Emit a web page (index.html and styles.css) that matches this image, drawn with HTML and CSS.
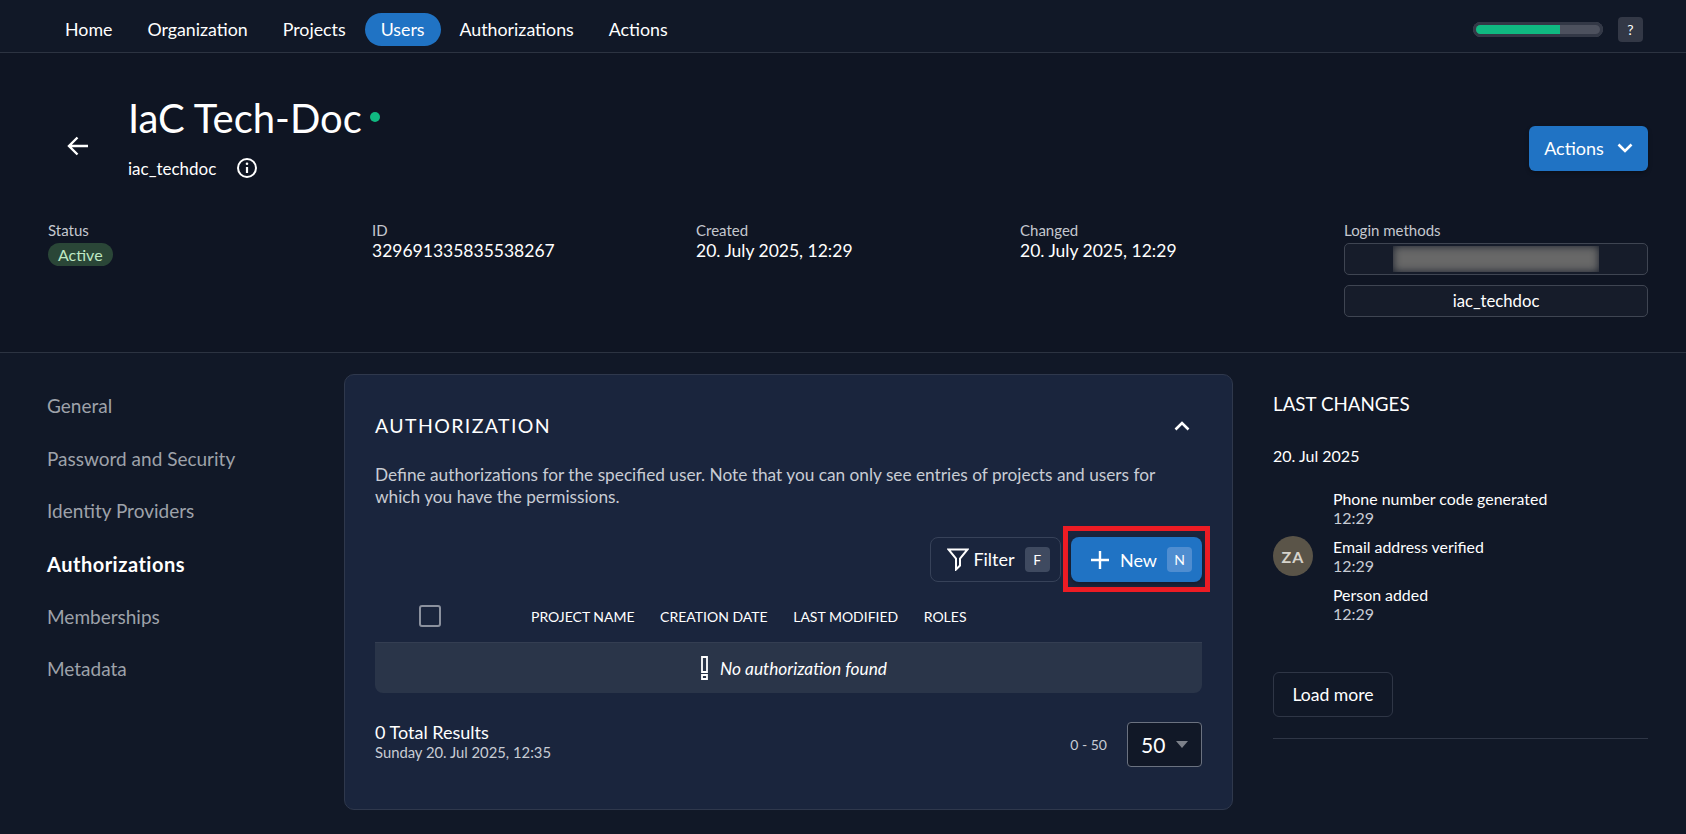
FILE: index.html
```html
<!DOCTYPE html>
<html lang="en">
<head>
<meta charset="utf-8">
<title>IaC Tech-Doc</title>
<link rel="stylesheet" href="styles.css">
</head>
<body>
<nav class="topnav">
  <div class="nav-links">
    <a class="nav-link">Home</a>
    <a class="nav-link">Organization</a>
    <a class="nav-link">Projects</a>
    <a class="nav-link active">Users</a>
    <a class="nav-link">Authorizations</a>
    <a class="nav-link">Actions</a>
  </div>
  <div class="nav-right">
    <div class="progress"><div class="progress-fill"></div></div>
    <div class="help">?</div>
  </div>
</nav>
<header class="head">
  <div class="head-top">
    <svg class="back" viewBox="0 0 22 20" width="22" height="20"><path d="M21 10H2M10.500 1.500 2 10l8.500 8.500" fill="none" stroke="#fff" stroke-width="2.400"/></svg>
    <div class="title-block">
      <div class="title-row"><h1 class="title">IaC Tech-Doc</h1><span class="dot"></span></div>
      <div class="sub-row"><span class="username">iac_techdoc</span>
        <svg class="info" viewBox="0 0 22 22" width="22" height="22"><circle cx="11" cy="11" r="9" fill="none" stroke="#fff" stroke-width="2"/><path d="M11 10v6" stroke="#fff" stroke-width="2.200"/><circle cx="11" cy="6.800" r="1.300" fill="#fff"/></svg>
      </div>
    </div>
    <button class="btn-actions">Actions
      <svg viewBox="0 0 16 10" width="16" height="10"><path d="M1.500 1.500 8 8l6.500-6.500" fill="none" stroke="#fff" stroke-width="2.600"/></svg>
    </button>
  </div>
  <div class="meta">
    <div class="meta-col"><div class="meta-label">Status</div><span class="badge">Active</span></div>
    <div class="meta-col"><div class="meta-label">ID</div><div class="meta-value">329691335835538267</div></div>
    <div class="meta-col"><div class="meta-label">Created</div><div class="meta-value">20. July 2025, 12:29</div></div>
    <div class="meta-col"><div class="meta-label">Changed</div><div class="meta-value">20. July 2025, 12:29</div></div>
    <div class="meta-col"><div class="meta-label">Login methods</div>
      <div class="login-box"><div class="blur-clip"><div class="blur"></div></div></div>
      <div class="login-box">iac_techdoc</div>
    </div>
  </div>
</header>
<main class="main">
  <aside class="side">
    <a class="side-link">General</a>
    <a class="side-link">Password and Security</a>
    <a class="side-link">Identity Providers</a>
    <a class="side-link current">Authorizations</a>
    <a class="side-link">Memberships</a>
    <a class="side-link">Metadata</a>
  </aside>
  <section class="card">
    <div class="card-head">
      <h2 class="card-title">AUTHORIZATION</h2>
      <svg viewBox="0 0 16 10" width="16" height="10"><path d="M1.500 8.500 8 2l6.500 6.500" fill="none" stroke="#fff" stroke-width="2.600"/></svg>
    </div>
    <p class="card-desc">Define authorizations for the specified user. Note that you can only see entries of projects and users for which you have the permissions.</p>
    <div class="toolbar">
      <button class="btn-filter">
        <svg viewBox="0 0 22 23" width="22" height="23"><path d="M1.500 1.500h19L13 10.500v7l-4 4v-11z" fill="none" stroke="#fff" stroke-width="2"/></svg>
        Filter<span class="key">F</span></button>
      <div class="highlight">
        <button class="btn-new">
          <svg viewBox="0 0 18 18" width="18" height="18"><path d="M9 0v18M0 9h18" stroke="#fff" stroke-width="2.400"/></svg>
          New<span class="key key-new">N</span></button>
      </div>
    </div>
    <div class="thead">
      <span class="check"></span>
      <span>PROJECT NAME</span>
      <span>CREATION DATE</span>
      <span>LAST MODIFIED</span>
      <span>ROLES</span>
    </div>
    <div class="empty">
      <svg viewBox="0 0 7 24" width="7" height="24"><path d="M1 1h5v15H1zM1 19h5v4H1z" fill="none" stroke="#fff" stroke-width="1.800"/></svg>
      <em>No authorization found</em>
    </div>
    <div class="pager">
      <div class="totals">
        <div class="total">0 Total Results</div>
        <div class="stamp">Sunday 20. Jul 2025, 12:35</div>
      </div>
      <span class="range">0 - 50</span>
      <div class="select">50<span class="caret"></span></div>
    </div>
  </section>
  <aside class="changes">
    <h2 class="changes-title">LAST CHANGES</h2>
    <div class="changes-date">20. Jul 2025</div>
    <div class="change-group">
      <div class="avatar">ZA</div>
      <div class="change-list">
        <div class="change"><div class="change-name">Phone number code generated</div><div class="change-time">12:29</div></div>
        <div class="change"><div class="change-name">Email address verified</div><div class="change-time">12:29</div></div>
        <div class="change"><div class="change-name">Person added</div><div class="change-time">12:29</div></div>
      </div>
    </div>
    <button class="btn-more">Load more</button>
    <div class="rule"></div>
  </aside>
</main>
</body>
</html>
```
FILE: styles.css
```css
* { box-sizing: border-box; }
html, body { margin: 0; padding: 0; }
body {
  width: 1686px;
  height: 834px;
  overflow: hidden;
  background: #111827;
  color: #fff;
  font-family: Lato, "Liberation Sans", sans-serif;
}
button { font-family: inherit; color: #fff; cursor: pointer; }
h1, h2, p { margin: 0; font-weight: 400; }

.topnav {
  height: 53px;
  padding: 6px 43px 0 49px;
  display: flex;
  align-items: center;
  justify-content: space-between;
  background: #111827;
  border-bottom: 1px solid #2c3341;
}
.nav-links { display: flex; align-items: center; gap: 3px; }
.nav-link {
  height: 33px;
  padding: 0 16px;
  border-radius: 17px;
  display: flex;
  align-items: center;
  font-size: 17.800px;
}
.nav-link.active { background: #2073c4; }
.nav-right { display: flex; align-items: center; gap: 15px; }
.progress {
  width: 130px;
  height: 15px;
  padding: 3px;
  border-radius: 8px;
  background: #4d515e;
  box-shadow: inset 0 0 0 3px #333846;
}
.progress-fill {
  width: 84px;
  height: 9px;
  border-radius: 5px 0 0 5px;
  background: #10b981;
}
.help {
  width: 25px;
  height: 25px;
  border-radius: 4px;
  background: #333846;
  display: flex;
  align-items: center;
  justify-content: center;
  font-size: 14px;
}

.head {
  height: 300px;
  padding: 0 38px 0 48px;
  background: #0f1523;
  border-bottom: 1px solid #2c3341;
}
.head-top { height: 168px; display: flex; align-items: flex-start; }
.back { margin: 83px 41px 0 19px; flex: none; }
.title-block { flex: 1; margin-top: 41px; margin-left: -2px; }
.title-row { display: flex; align-items: flex-start; gap: 8px; }
.title { font-size: 40px; line-height: 48px; }
.dot { width: 10px; height: 10px; border-radius: 50%; background: #10b981; margin-top: 18px; }
.sub-row { display: flex; align-items: center; gap: 20px; margin-top: 15px; }
.username { font-size: 17px; }
.btn-actions {
  width: 119px;
  height: 45px;
  margin-top: 73px;
  padding: 0 0 2px;
  border: 0;
  border-radius: 6px;
  background: #2073c4;
  font-size: 18px;
  display: flex;
  align-items: center;
  justify-content: center;
  gap: 13px;
  box-shadow: 0 2px 4px rgba(0,0,0,.3);
}
.meta { display: grid; grid-template-columns: repeat(4, 324px) 304px; }
.meta-label { font-size: 15px; line-height: 18px; color: #c5c8cf; }
.meta-value { font-size: 17.500px; line-height: 22px; margin-top: 1px; }
.badge {
  display: inline-block;
  height: 23px;
  padding: 0 10px;
  margin-top: 4px;
  border-radius: 12px;
  background: #2a4637;
  color: #bfe8c4;
  font-size: 16px;
  line-height: 23px;
}
.login-box {
  height: 32px;
  margin-top: 10px;
  border: 1px solid #3f4552;
  border-radius: 5px;
  background: #161c2a;
  font-size: 16.700px;
  display: flex;
  justify-content: center;
  align-items: center;
}
.meta-label + .login-box { margin-top: 4px; }
.blur-clip { width: 206px; height: 26px; overflow: hidden; }
.blur { height: 100%; background: #686868; filter: blur(4px); }

.main { display: flex; gap: 40px; padding: 21px 38px 0 48px; }
.side { width: 256px; flex: none; padding-top: 20px; display: flex; flex-direction: column; gap: 28.700px; }
.side-link { font-size: 19px; line-height: 24px; color: #9ea2aa; margin-left: -1px; }
.side-link.current { color: #fff; font-weight: 700; font-size: 20px; letter-spacing: .5px; }
.card {
  width: 889px;
  height: 436px;
  flex: none;
  padding: 0 30px;
  border: 1px solid #2f384c;
  border-radius: 10px;
  background: #1a253d;
}
.card-head { display: flex; align-items: center; justify-content: space-between; padding: 39px 12px 0 0; }
.card-title { font-size: 19.500px; line-height: 24px; letter-spacing: 1.400px; }
.card-desc { margin-top: 26px; padding-right: 10px; font-size: 17.250px; line-height: 22px; color: #c8ccd4; }
.toolbar { display: flex; justify-content: flex-end; align-items: center; margin-top: 18px; gap: 2px; }
.btn-filter {
  width: 131px;
  height: 45px;
  padding: 0 0 0 6px;
  background: transparent;
  border: 1px solid #374259;
  border-radius: 8px;
  font-size: 18px;
  display: flex;
  align-items: center;
  justify-content: center;
  gap: 4px;
}
.key {
  width: 25px;
  height: 25px;
  border-radius: 4px;
  background: #3f4a60;
  margin-left: 6px;
  display: flex;
  align-items: center;
  justify-content: center;
  font-size: 14px;
}
.highlight { margin-right: -8px; padding: 6px 3px 5px 3px; border: 5px solid #ed1c24; }
.btn-new {
  width: 131px;
  height: 45px;
  padding: 0 0 0 10px;
  border: 0;
  border-radius: 8px;
  background: #2073c4;
  font-size: 18px;
  display: flex;
  align-items: center;
  justify-content: center;
  gap: 11px;
  box-shadow: 0 2px 4px rgba(0,0,0,.3);
}
.key-new { background: #4f8dd0; margin-left: -1px; }
.thead {
  height: 50px;
  display: flex;
  align-items: center;
  font-size: 14px;
  gap: 25.500px;
  padding: 0 0 2px 44px;
}
.check {
  width: 22px;
  height: 22px;
  margin-right: 64.500px;
  border: 2px solid #8b919e;
  border-radius: 3px;
}
.empty {
  height: 51px;
  padding-left: 11px;
  display: flex;
  align-items: center;
  justify-content: center;
  gap: 12px;
  border-top: 1px solid #343e52;
  border-radius: 0 0 8px 8px;
  background: #2a3549;
  font-size: 17.300px;
}
.pager { display: flex; align-items: center; margin-top: 28px; }
.totals { flex: 1; margin-bottom: 6px; }
.total { font-size: 18px; line-height: 22px; }
.stamp { font-size: 14.800px; line-height: 19px; color: #c8ccd4; }
.range { font-size: 14px; color: #c8ccd4; margin-right: 20px; }
.select {
  width: 75px;
  height: 45px;
  padding-left: 13px;
  border: 1px solid #6b7280;
  border-radius: 4px;
  background: #111827;
  font-size: 21px;
  display: flex;
  align-items: center;
  gap: 11px;
}
.caret { border-left: 6px solid transparent; border-right: 6px solid transparent; border-top: 7px solid #7d818a; }

.changes { width: 375px; flex: none; padding-top: 18px; }
.changes-title { font-size: 18.800px; line-height: 24px; }
.changes-date { margin-top: 29px; font-size: 16px; line-height: 22px; }
.change-group { display: flex; align-items: center; margin-top: 22px; gap: 20px; }
.avatar {
  width: 40px;
  height: 40px;
  border-radius: 50%;
  background: #5a5448;
  color: #d6d3cb;
  font-size: 16px;
  font-weight: 700;
  letter-spacing: 1px;
  display: flex;
  align-items: center;
  justify-content: center;
}
.change-list { display: flex; flex-direction: column; gap: 10px; }
.change-name { font-size: 15.900px; line-height: 20px; }
.change-time { font-size: 16px; line-height: 18px; color: #c8ccd4; }
.btn-more {
  display: block;
  width: 120px;
  height: 45px;
  margin-top: 49px;
  padding: 0;
  background: transparent;
  border: 1px solid #2f3646;
  border-radius: 6px;
  font-size: 17.600px;
}
.rule { height: 1px; margin-top: 21px; background: #2f3646; }
```
